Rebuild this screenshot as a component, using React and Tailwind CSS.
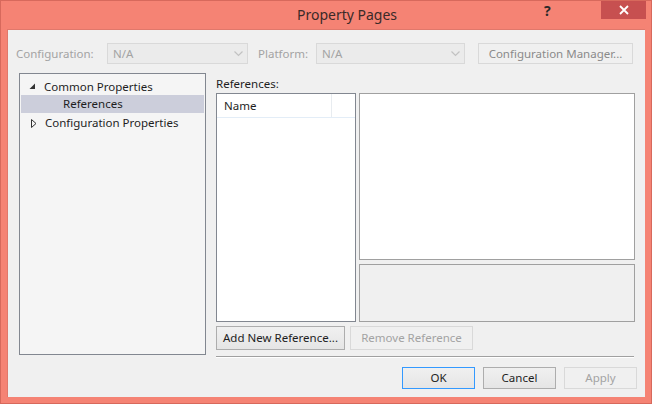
import React from 'react'

const font = { fontFamily: '"Segoe UI", "Noto Sans", "Liberation Sans", sans-serif' }

const Chevron = () => (
  <svg width="9" height="6" viewBox="0 0 9 6" className="shrink-0">
    <path d="M0.5 0.5 L4.5 4.5 L8.5 0.5" fill="none" stroke="#c2c2c2" strokeWidth="1.2" />
  </svg>
)

const Combo = ({ w }) => (
  <div className={`${w} h-[21px] border border-[#d9d9d9] bg-[#ebebeb] flex items-center justify-between pl-[5px] pr-[4px] text-[#a3a3a3]`}>
    <span>N/A</span>
    <Chevron />
  </div>
)

const Btn = ({ children, className = '', disabled, focused }) => (
  <div
    className={`flex items-center justify-center border ${
      disabled
        ? 'border-[#d9d9d9] bg-[#f0f0f0] text-[#a3a3a3]'
        : focused
        ? 'border-[#3399ff] bg-gradient-to-b from-[#f0f0f0] to-[#e5e5e5] text-[#1e1e1e]'
        : 'border-[#adadad] bg-gradient-to-b from-[#f0f0f0] to-[#e5e5e5] text-[#1e1e1e]'
    } ${className}`}
  >
    {children}
  </div>
)

export default function App() {
  return (
    <div style={font} className="w-[652px] h-[404px] bg-[#f58374] border border-[#d7695c] flex flex-col text-[11.5px] leading-none overflow-hidden">
      {/* title bar */}
      <div className="h-[28px] shrink-0 flex items-start">
        <div className="flex-1 text-center text-[14px] text-[#3a2a28] pt-[7px] pl-[149px]">Property Pages</div>
        <div className="w-[57px] pt-[3px] text-[14px] font-bold text-[#2a2a2a]">?</div>
        <div className="w-[45px] h-[19px] bg-[#c75050] flex items-center justify-center mr-[5px] -mt-px">
          <svg width="10" height="10" viewBox="0 0 10 10">
            <path d="M1 1 L9 9 M9 1 L1 9" stroke="#ffffff" strokeWidth="1.8" />
          </svg>
        </div>
      </div>

      {/* client */}
      <div className="mx-[6px] mb-[6px] flex-1 bg-[#f0f0f0] border-t border-l border-[#e0786b] flex flex-col">
        {/* configuration row */}
        <div className="flex items-center mt-[13px] h-[21px]">
          <span className="ml-[8px] w-[91px] text-[#a3a3a3]">Configuration:</span>
          <Combo w="w-[141px]" />
          <span className="ml-[10px] w-[58px] text-[#a3a3a3]">Platform:</span>
          <Combo w="w-[149px]" />
          <Btn className="ml-[13px] w-[155px] h-[21px]" disabled>
            <span className="text-[#8a8a8a]">Configuration Manager...</span>
          </Btn>
        </div>

        {/* main */}
        <div className="flex mt-[9px] flex-1">
          {/* tree */}
          <div className="ml-[11px] w-[187px] h-[282px] border border-[#828790] bg-[#f5f5f5] pt-[4px] text-[#1e1e1e]">
            <div className="h-[17px] flex items-center">
              <svg width="7" height="7" viewBox="0 0 7 7" className="ml-[9px]">
                <path d="M6 0.5 L6 6 L0.5 6 Z" fill="#333" />
              </svg>
              <span className="ml-[8px]">Common Properties</span>
            </div>
            <div className="h-[18px] mx-px flex items-center bg-[#cccedb]">
              <span className="ml-[42px]">References</span>
            </div>
            <div className="h-[19px] flex items-center pt-px">
              <svg width="6" height="9" viewBox="0 0 6 9" className="ml-[11px]">
                <path d="M0.5 0.5 L5 4.5 L0.5 8.5 Z" fill="none" stroke="#333" strokeWidth="1" />
              </svg>
              <span className="ml-[8px]">Configuration Properties</span>
            </div>
          </div>

          {/* right side */}
          <div className="ml-[10px] w-[419px] flex flex-col">
            <div className="h-[20px] pt-[5px] text-[#1e1e1e]">References:</div>
            <div className="flex h-[229px]">
              <div className="w-[140px] border border-[#828790] bg-white flex flex-col">
                <div className="h-[24px] flex border-b border-[#e3edf7]">
                  <div className="w-[115px] flex items-center pl-[7px] text-[#1e1e1e] border-r border-[#e8ecf0]">Name</div>
                </div>
              </div>
              <div className="ml-[3px] w-[276px] flex flex-col">
                <div className="h-[167px] border border-[#a0a0a0] bg-white" />
                <div className="mt-[4px] flex-1 border border-[#a0a0a0] bg-[#f0f0f0]" />
              </div>
            </div>
            <div className="flex mt-[4px]">
              <Btn className="w-[129px] h-[24px]">Add New Reference...</Btn>
              <Btn className="ml-[5px] w-[123px] h-[24px]" disabled>Remove Reference</Btn>
            </div>
            <div className="mt-[6px] w-[418px] h-[2px] border-t border-[#a0a0a0] bg-white" />
          </div>
        </div>

        {/* bottom buttons */}
        <div className="flex justify-end pr-[8px] mb-[8px] mt-[8px]">
          <Btn className="w-[73px] h-[22px]" focused>OK</Btn>
          <Btn className="ml-[8px] w-[73px] h-[22px]">Cancel</Btn>
          <Btn className="ml-[8px] w-[73px] h-[22px]" disabled>Apply</Btn>
        </div>
      </div>
    </div>
  )
}
